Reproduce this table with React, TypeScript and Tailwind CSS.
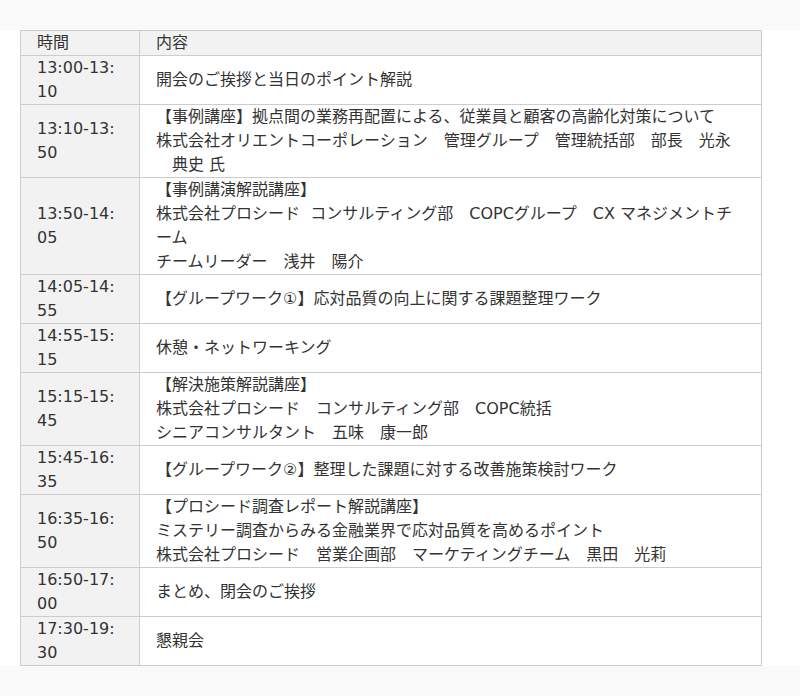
import React from 'react';

type Row = { time: string; lines: string[] };

const rows: Row[] = [
  { time: '13:00-13:10', lines: ['開会のご挨拶と当日のポイント解説'] },
  {
    time: '13:10-13:50',
    lines: [
      '【事例講座】拠点間の業務再配置による、従業員と顧客の高齢化対策について',
      '株式会社オリエントコーポレーション　管理グループ　管理統括部　部長　光永',
      '　典史 氏',
    ],
  },
  {
    time: '13:50-14:05',
    lines: [
      '【事例講演解説講座】',
      '株式会社プロシード\u00a0 コンサルティング部　COPCグループ　CX マネジメントチ',
      'ーム',
      'チームリーダー　浅井　陽介',
    ],
  },
  { time: '14:05-14:55', lines: ['【グループワーク①】応対品質の向上に関する課題整理ワーク'] },
  { time: '14:55-15:15', lines: ['休憩・ネットワーキング'] },
  {
    time: '15:15-15:45',
    lines: ['【解決施策解説講座】', '株式会社プロシード　コンサルティング部　COPC統括', 'シニアコンサルタント　五味　康一郎'],
  },
  { time: '15:45-16:35', lines: ['【グループワーク②】整理した課題に対する改善施策検討ワーク'] },
  {
    time: '16:35-16:50',
    lines: [
      '【プロシード調査レポート解説講座】',
      'ミステリー調査からみる金融業界で応対品質を高めるポイント',
      '株式会社プロシード　営業企画部　マーケティングチーム　黒田　光莉',
    ],
  },
  { time: '16:50-17:00', lines: ['まとめ、閉会のご挨拶'] },
  { time: '17:30-19:30', lines: ['懇親会'] },
];

export default function App() {
  return (
    <div
      className="min-h-screen flex flex-col bg-[#f9f9f9] text-[#333] text-[16px] leading-6"
      style={{ fontFamily: '"DejaVu Sans", "Noto Sans CJK JP", sans-serif' }}
    >
      <div className="h-[30px]" />
      <div className="bg-white px-5">
        <table className="w-[742px] table-fixed border-collapse border border-[#ccc]">
          <colgroup>
            <col className="w-[119px]" />
            <col />
          </colgroup>
          <thead>
            <tr className="bg-[#f2f2f2]">
              <th className="border border-[#ccc] px-4 py-0 text-left font-normal">時間</th>
              <th className="border border-[#ccc] px-4 py-0 text-left font-normal">内容</th>
            </tr>
          </thead>
          <tbody>
            {rows.map((r) => (
              <tr key={r.time}>
                <td className="border border-[#ccc] bg-[#f2f2f2] px-4 py-0 align-middle break-all">{r.time}</td>
                <td className="border border-[#ccc] px-4 py-0 align-middle whitespace-nowrap">
                  {r.lines.map((l, i) => (
                    <div key={i}>{l}</div>
                  ))}
                </td>
              </tr>
            ))}
          </tbody>
        </table>
      </div>
      <div className="flex-1" />
    </div>
  );
}
